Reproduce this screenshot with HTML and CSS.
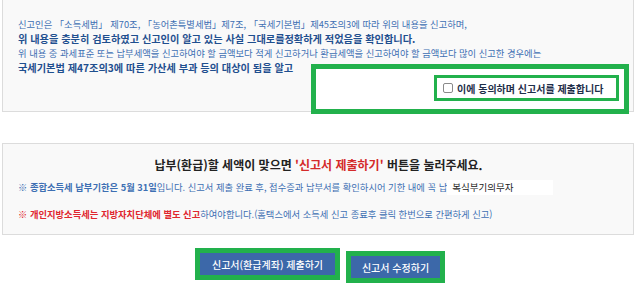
FILE: index.html
```html
<!DOCTYPE html>
<html lang="ko">
<head>
<meta charset="utf-8">
<link rel="stylesheet" href="styles.css">
</head>
<body>
<div class="page">
  <section class="notice">
    <p class="law">신고인은 「소득세법」 제70조, 「농어촌특별세법」제7조, 「국세기본법」제45조의3에 따라 위의 내용을 신고하며,</p>
    <p class="confirm">위 내용을 충분히 검토하였고 신고인이 알고 있는 사실 그대로를정확하게 적었음을 확인합니다.</p>
    <p class="law">위 내용 중 과세표준 또는 납부세액을 신고하여야 할 금액보다 적게 신고하거나 환급세액을 신고하여야 할 금액보다 많이 신고한 경우에는</p>
    <p class="confirm">국세기본법 제47조의3에 따른 가산세 부과 등의 대상이 됨을 알고</p>
    <div class="mark mark-agree"></div>
    <div class="agree-row">
      <label class="agree"><span class="cb"></span>이에 동의하며 신고서를 제출합니다</label>
    </div>
  </section>

  <section class="guide">
    <h2 class="guide-title">납부(환급)할 세액이 맞으면 <em>'신고서 제출하기'</em> 버튼을 눌러주세요.</h2>
    <p class="guide-line">※ <b>종합소득세 납부기한은 5월 31일</b>입니다. 신고서 제출 완료 후, 접수증과 납부서를 확인하시어 기한 내에 꼭 납<span class="tip">복식부기의무자</span></p>
    <p class="guide-line"><span class="red">※ <b>개인지방소득세는 지방자치단체에 별도 신고</b></span>하여야합니다.(홈택스에서 소득세 신고 종료후 클릭 한번으로 간편하게 신고)</p>
  </section>

  <div class="actions">
    <span class="frame"><button class="btn btn-submit">신고서(환급계좌) 제출하기</button></span>
    <span class="frame frame-low"><button class="btn btn-edit">신고서 수정하기</button></span>
  </div>
</div>
</body>
</html>
```

FILE: styles.css
```css
* { box-sizing: border-box; }
html, body { margin: 0; padding: 0; background: #fff; }
body {
  font-family: "Noto Sans CJK KR", "Noto Sans", sans-serif;
  width: 640px;
  height: 292px;
  overflow: hidden;
}
.page { padding-left: 2px; width: 634px; }

.notice {
  position: relative;
  margin-top: -20px;
  padding: 36px 14px 10px 15px;
  height: 132px;
  background: #f9f9f9;
  border: 1px solid #dcdcdc;
}
.notice p { margin: 0; white-space: nowrap; overflow: hidden; }
.law {
  font-size: 9.3px;
  line-height: 14px;
  color: #3d6fb3;
}
.confirm {
  font-size: 10.2px;
  line-height: 15px;
  font-weight: 700;
  color: #1f4f8f;
}
.agree-row {
  position: relative;
  z-index: 1;
  display: flex;
  justify-content: flex-end;
  margin-top: 0;
}
.agree {
  display: flex;
  align-items: center;
  gap: 4px;
  height: 26px;
  width: 185px;
  padding-left: 6px;
  background: #fff;
  border: 3px solid #22b14c;
  font-size: 10px;
  font-weight: 700;
  color: #1e2e4a;
  white-space: nowrap;
}
.cb {
  width: 10px;
  height: 10px;
  border: 1px solid #8a8a8a;
  border-radius: 2px;
  background: #fff;
  flex: none;
}
.mark {
  position: absolute;
  border: 5px solid #22b14c;
  background: #fff;
}
.mark-agree {
  left: 308px;
  top: 83px;
  width: 318px;
  height: 50px;
}

.guide {
  position: relative;
  margin-top: 31px;
  height: 92px;
  padding: 12px 14px 0 15px;
  background: #f9f9f9;
  border: 1px solid #dcdcdc;
}
.guide-title {
  margin: 0 0 6px;
  text-align: center;
  font-size: 12px;
  line-height: 18px;
  font-weight: 700;
  color: #222;
}
.guide-title em { font-style: normal; color: #d42a2a; }
.guide-line {
  margin: 0 0 12px;
  font-size: 9.3px;
  line-height: 15px;
  color: #3d6fb3;
  white-space: nowrap;
  overflow: hidden;
}
.guide-line b { font-weight: 700; }
.red { color: #e0262f; }
.tip {
  display: inline-block;
  vertical-align: top;
  width: 106px;
  height: 15px;
  padding-left: 5px;
  background: #fff;
  color: #222;
  font-size: 9.5px;
}

.actions {
  display: flex;
  justify-content: center;
  align-items: flex-start;
  gap: 6px;
  margin-top: 13px;
  padding-left: 4px;
}
.frame {
  display: inline-flex;
  border: 5px solid #22b14c;
}
.frame-low { margin-top: 3px; }
.btn {
  height: 22px;
  padding: 0;
  border: 0;
  background: #3c68a9;
  color: #fff;
  font-family: inherit;
  font-size: 10px;
  font-weight: 500;
  white-space: nowrap;
  text-align: center;
}
.btn-submit { width: 135px; }
.btn-edit { width: 89px; }
```
